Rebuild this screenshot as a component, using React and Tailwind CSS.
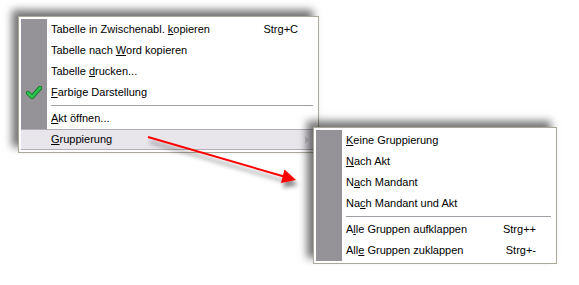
import React from "react";

const font = { fontFamily: '"Liberation Sans", Tahoma, sans-serif' };

// label with one underlined mnemonic letter
const Label = ({ text, u }) => (
  <span>
    {text.slice(0, u)}
    <span className="underline underline-offset-[1px]">{text[u]}</span>
    {text.slice(u + 1)}
  </span>
);

const Check = () => (
  <svg width="16" height="14" viewBox="0 0 16 14">
    <path d="M2 7 L6 11 L14 2" fill="none" stroke="#127a2a" strokeWidth="4.4" strokeLinecap="round" strokeLinejoin="round" />
    <path d="M2 7 L6 11 L14 2" fill="none" stroke="#2fc44f" strokeWidth="2.6" strokeLinecap="round" strokeLinejoin="round" />
  </svg>
);

const Row = ({ text, u, shortcut, icon, highlighted, submenu }) => (
  <div
    className={`flex h-[21px] items-stretch ${
      highlighted ? "bg-[#e8e5eb] border-y border-[#b2aeb8]" : ""
    }`}
  >
    <div
      className={`w-[26px] shrink-0 flex items-center justify-center ${
        highlighted ? "" : "bg-[#959397]"
      }`}
    >
      {icon}
    </div>
    <div className="flex-1 flex items-center pl-[4px] pr-[18px] text-[11px] text-black">
      <span className="flex-1">
        <Label text={text} u={u} />
      </span>
      {shortcut && <span>{shortcut}</span>}
      {submenu && (
        <svg width="6" height="8" viewBox="0 0 6 8" className="-mr-[12px]">
          <path d="M1 0 L5 4 L1 8 Z" fill="#cbc7cf" />
        </svg>
      )}
    </div>
  </div>
);

const Separator = () => (
  <div className="flex h-[5px]">
    <div className="w-[26px] shrink-0 bg-[#959397]" />
    <div className="flex-1 flex items-center pl-[4px] pr-[3px]">
      <div className="h-px w-full bg-[#a19fa5]" />
    </div>
  </div>
);

const Menu = ({ className, children }) => (
  <div
    className={`bg-white border border-[#aca899] p-[2px] shadow-[-6px_-6px_8px_rgba(0,0,0,0.55)] ${className}`}
  >
    {children}
  </div>
);

export default function App() {
  return (
    <div className="relative w-[579px] h-[285px] bg-white overflow-hidden" style={font}>
      <Menu className="absolute left-[18px] top-[16px] w-[301px]">
        <Row text="Tabelle in Zwischenabl. kopieren" u={24} shortcut="Strg+C" />
        <Row text="Tabelle nach Word kopieren" u={13} />
        <Row text="Tabelle drucken..." u={8} />
        <Row text="Farbige Darstellung" u={0} icon={<Check />} />
        <Separator />
        <Row text="Akt öffnen..." u={0} />
        <Row text="Gruppierung" u={0} highlighted submenu />
      </Menu>

      <Menu className="absolute left-[313px] top-[127px] w-[244px]">
        <Row text="Keine Gruppierung" u={0} />
        <Row text="Nach Akt" u={0} />
        <Row text="Nach Mandant" u={1} />
        <Row text="Nach Mandant und Akt" u={2} />
        <Separator />
        <Row text="Alle Gruppen aufklappen" u={1} shortcut="Strg++" />
        <Row text="Alle Gruppen zuklappen" u={3} shortcut="Strg+-" />
      </Menu>

      {/* red pointer arrow */}
      <svg className="absolute left-0 top-0 pointer-events-none" width="579" height="285">
        <defs>
          <filter id="sh" x="-20%" y="-20%" width="140%" height="160%">
            <feDropShadow dx="2" dy="5" stdDeviation="2" floodColor="#000" floodOpacity="0.45" />
          </filter>
        </defs>
        <g filter="url(#sh)">
          <line x1="148" y1="137" x2="284" y2="176.5" stroke="#ff0000" strokeWidth="2" />
          <polygon points="296,180 284.5,169.5 281,183" fill="#ff0000" />
        </g>
      </svg>
    </div>
  );
}
